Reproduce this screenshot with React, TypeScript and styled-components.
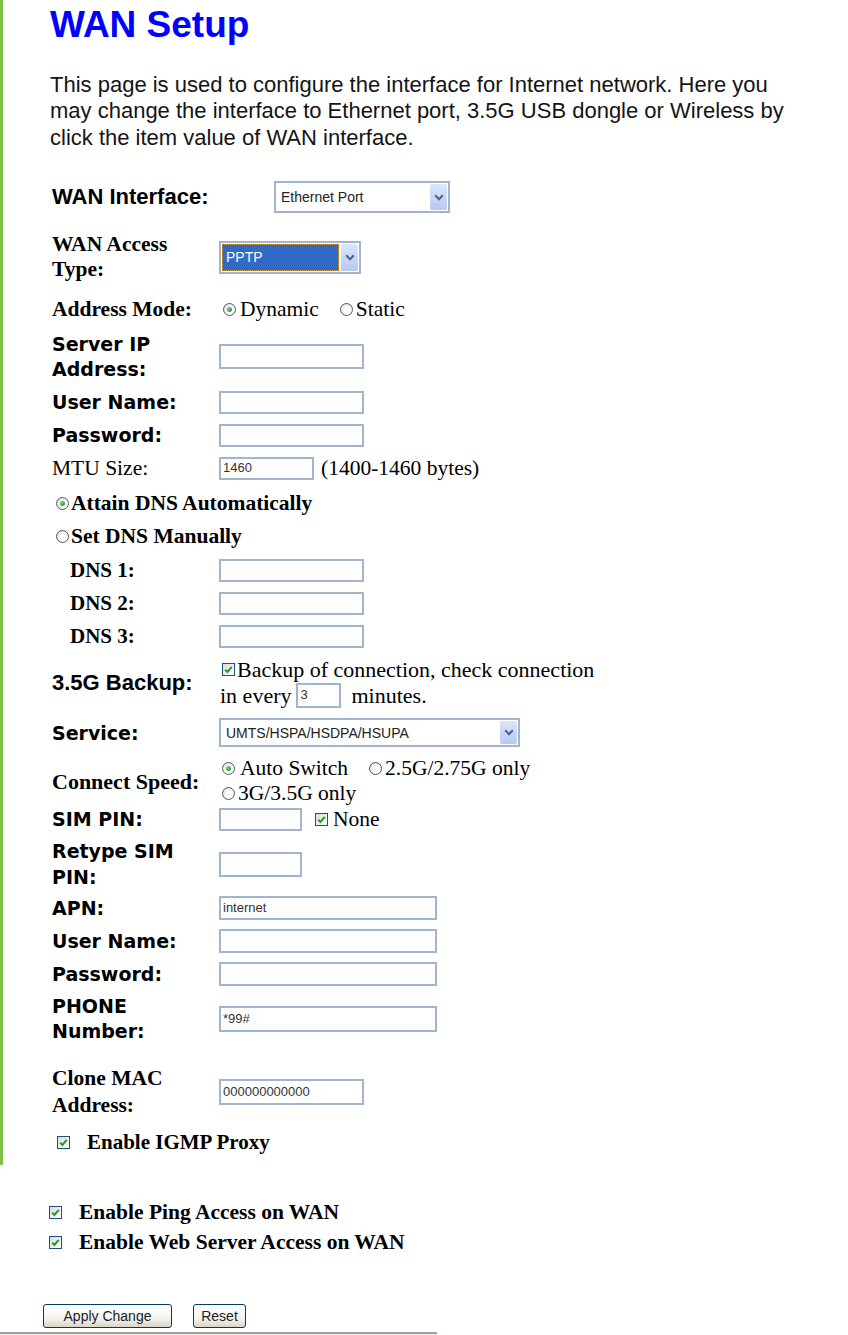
import React from "react";
import styled, { createGlobalStyle } from "styled-components";

const GlobalStyle = createGlobalStyle`
  html, body {
    margin: 0;
    padding: 0;
    background: #ffffff;
  }
`;

type Face = "arial" | "times" | "verdana";

const faces: Record<Face, string> = {
  arial: `"Liberation Sans", Arial, sans-serif`,
  times: `"Liberation Serif", "Times New Roman", serif`,
  verdana: `"DejaVu Sans", Verdana, sans-serif`,
};

const Page = styled.div`
  width: 848px;
  height: 1335px;
  display: flex;
  flex-direction: column;
  background: #ffffff;
  overflow: hidden;
`;

const Framed = styled.section`
  border-left: 3px solid #7dc242;
  padding: 4px 0 11px 47px;
`;

const Title = styled.h1`
  margin: 0;
  font: bold 37px/42px "Liberation Sans", Arial, sans-serif;
  color: #0000ff;
`;

const Intro = styled.p`
  margin: 25.5px 0 0;
  font: 22px/26.5px "Liberation Sans", Arial, sans-serif;
  color: #141414;
  white-space: nowrap;
`;

const Form = styled.div`
  margin-left: 2px;
  display: flex;
  flex-direction: column;
`;

const Row = styled.div<{ $h?: number; $mt: number; $pl?: number }>`
  display: flex;
  align-items: center;
  height: ${(p) => p.$h ?? 24}px;
  margin-top: ${(p) => p.$mt}px;
  padding-left: ${(p) => p.$pl ?? 0}px;
`;

const Label = styled.div<{
  $face: Face;
  $size: number;
  $lh: number;
  $regular?: boolean;
  $indent?: number;
}>`
  box-sizing: border-box;
  flex: none;
  width: 167px;
  padding-left: ${(p) => p.$indent ?? 0}px;
  font-family: ${(p) => faces[p.$face]};
  font-size: ${(p) => p.$size}px;
  line-height: ${(p) => p.$lh}px;
  font-weight: ${(p) => (p.$regular ? 400 : 700)};
  color: #000;
  white-space: nowrap;
`;

const Field = styled.input<{ $w: number; $h?: number; $ml?: number }>`
  box-sizing: border-box;
  flex: none;
  width: ${(p) => p.$w}px;
  height: ${(p) => p.$h ?? 23}px;
  margin: 0 0 0 ${(p) => p.$ml ?? 0}px;
  padding: 0 2px 2px;
  border: 2px solid #a3b5cc;
  background: #fff;
  font: 13px "Liberation Sans", Arial, sans-serif;
  color: #333;
  outline: none;
`;

const SelectBox = styled.div<{ $w: number; $h: number; $ml?: number }>`
  box-sizing: border-box;
  flex: none;
  display: flex;
  width: ${(p) => p.$w}px;
  height: ${(p) => p.$h}px;
  margin-left: ${(p) => p.$ml ?? 0}px;
  padding: 1px;
  border: 2px solid #a3b5cc;
  background: #fff;
`;

const SelectValue = styled.div<{ $active?: boolean }>`
  flex: 1;
  display: flex;
  align-items: center;
  padding-left: 4px;
  font: 14px "Liberation Sans", Arial, sans-serif;
  color: ${(p) => (p.$active ? "#ffffff" : "#222")};
  background: ${(p) => (p.$active ? "#316ac5" : "transparent")};
  outline: ${(p) => (p.$active ? "1px dotted #e0a040" : "none")};
  outline-offset: -1px;
`;

const ArrowButton = styled.div`
  flex: none;
  width: 17px;
  margin-left: 2px;
  border-radius: 2px;
  background: linear-gradient(#dbe6fc, #b6c9f3);
  display: flex;
  align-items: center;
  justify-content: center;
`;

const Text = styled.span<{ $face?: Face; $bold?: boolean; $size?: number; $ml?: number }>`
  font-family: ${(p) => faces[p.$face ?? "times"]};
  font-size: ${(p) => p.$size ?? 21.5}px;
  font-weight: ${(p) => (p.$bold ? 700 : 400)};
  line-height: 25px;
  margin-left: ${(p) => p.$ml ?? 0}px;
  color: #000;
  white-space: nowrap;
`;

const Options = styled.div<{ $ml?: number }>`
  display: flex;
  flex-direction: column;
  margin-left: ${(p) => p.$ml ?? 0}px;
`;

const OptLine = styled.div<{ $h?: number }>`
  display: flex;
  align-items: center;
  height: ${(p) => p.$h ?? 25}px;
`;

const RadioRing = styled.span<{ $ml?: number }>`
  box-sizing: border-box;
  flex: none;
  width: 13px;
  height: 13px;
  margin-left: ${(p) => p.$ml ?? 0}px;
  border-radius: 50%;
  border: 1.5px solid #4f5b68;
  background: radial-gradient(circle at 60% 60%, #ffffff 30%, #cfd3d8);
  display: flex;
  align-items: center;
  justify-content: center;
`;

const RadioDot = styled.span`
  width: 5px;
  height: 5px;
  border-radius: 50%;
  background: radial-gradient(circle at 35% 35%, #6fd86f, #188a18);
`;

const CheckBox = styled.span<{ $ml?: number }>`
  box-sizing: border-box;
  flex: none;
  width: 13px;
  height: 13px;
  margin-left: ${(p) => p.$ml ?? 0}px;
  border: 1px solid #1c5180;
  background: linear-gradient(135deg, #dcdcd6, #ffffff);
  display: flex;
  align-items: center;
  justify-content: center;
`;

const Bottom = styled.section`
  display: flex;
  flex-direction: column;
  padding-left: 43px;
`;

const Buttons = styled.div`
  display: flex;
  gap: 21px;
  height: 24px;
  margin-top: 50px;
`;

const Button = styled.button<{ $w: number }>`
  box-sizing: border-box;
  width: ${(p) => p.$w}px;
  height: 24px;
  padding: 0 0 1px;
  border: 1px solid #003c74;
  border-radius: 3px;
  background: linear-gradient(#ffffff, #f4f4ef 60%, #d9d5c9);
  font: 14px "Liberation Sans", Arial, sans-serif;
  color: #222;
`;

const Footer = styled.div`
  box-sizing: border-box;
  width: 437px;
  height: 3px;
  margin-top: 4px;
  border-top: 2px solid #a09f98;
  background: #ecebe4;
`;

const Radio: React.FC<{ on?: boolean; ml?: number }> = ({ on, ml }) => (
  <RadioRing $ml={ml}>{on && <RadioDot />}</RadioRing>
);

const Check: React.FC<{ ml?: number }> = ({ ml }) => (
  <CheckBox $ml={ml}>
    <svg width="9" height="9" viewBox="0 0 9 9">
      <path d="M1.2 4.6 L3.4 6.9 L7.8 1.8" fill="none" stroke="#1f9d1f" strokeWidth="2" />
    </svg>
  </CheckBox>
);

const Select: React.FC<{ w: number; h: number; ml?: number; value: string; active?: boolean }> = ({
  w,
  h,
  ml,
  value,
  active,
}) => (
  <SelectBox $w={w} $h={h} $ml={ml}>
    <SelectValue $active={active}>{value}</SelectValue>
    <ArrowButton>
      <svg width="10" height="7" viewBox="0 0 10 7">
        <path d="M1.2 1.3 L5 5.2 L8.8 1.3" fill="none" stroke="#4d6185" strokeWidth="2" />
      </svg>
    </ArrowButton>
  </SelectBox>
);

const App: React.FC = () => {
  return (
    <Page>
      <GlobalStyle />
      <Framed>
        <Title>WAN Setup</Title>
        <Intro>
          This page is used to configure the interface for Internet network. Here you
          <br />
          may change the interface to Ethernet port, 3.5G USB dongle or Wireless by
          <br />
          click the item value of WAN interface.
        </Intro>

        <Form>
          <Row $mt={30} $h={32}>
            <Label $face="arial" $size={22} $lh={26}>WAN Interface:</Label>
            <Select w={176} h={32} ml={55} value="Ethernet Port" />
          </Row>

          <Row $mt={19} $h={50}>
            <Label $face="times" $size={21.5} $lh={25}>
              WAN Access
              <br />
              Type:
            </Label>
            <Select w={142} h={33} value="PPTP" active />
          </Row>

          <Row $mt={15} $h={25}>
            <Label $face="times" $size={21.5} $lh={25}>Address Mode:</Label>
            <Options $ml={4}>
              <OptLine>
                <Radio on />
                <Text $ml={4}>Dynamic</Text>
                <Radio ml={21} />
                <Text $ml={3}>Static</Text>
              </OptLine>
            </Options>
          </Row>

          <Row $mt={10} $h={49}>
            <Label $face="verdana" $size={19} $lh={24.5}>
              Server IP
              <br />
              Address:
            </Label>
            <Field $w={145} $h={25} readOnly />
          </Row>

          <Row $mt={9}>
            <Label $face="verdana" $size={19} $lh={24}>User Name:</Label>
            <Field $w={145} readOnly />
          </Row>

          <Row $mt={9}>
            <Label $face="verdana" $size={19} $lh={24}>Password:</Label>
            <Field $w={145} readOnly />
          </Row>

          <Row $mt={9}>
            <Label $face="times" $size={21.5} $lh={24} $regular>MTU Size:</Label>
            <Field $w={95} readOnly defaultValue="1460" />
            <Text $ml={7}>(1400-1460 bytes)</Text>
          </Row>

          <Row $mt={11} $pl={4}>
            <Radio on />
            <Text $bold $ml={2}>Attain DNS Automatically</Text>
          </Row>

          <Row $mt={9} $pl={4}>
            <Radio />
            <Text $bold $ml={2}>Set DNS Manually</Text>
          </Row>

          {[1, 2, 3].map((n, i) => (
            <Row key={n} $mt={i === 0 ? 10 : 9}>
              <Label $face="times" $size={21} $lh={24} $indent={18}>DNS {n}:</Label>
              <Field $w={145} readOnly />
            </Row>
          ))}

          <Row $mt={9} $h={51}>
            <Label $face="arial" $size={22} $lh={26}>3.5G Backup:</Label>
            <Options>
              <OptLine>
                <Check ml={3} />
                <Text $size={22} $ml={2}>Backup of connection, check connection</Text>
              </OptLine>
              <OptLine $h={26}>
                <Text $size={22} $ml={1}>in every</Text>
                <Field $w={45} $h={25} $ml={5} readOnly defaultValue="3" />
                <Text $size={22} $ml={10}>minutes.</Text>
              </OptLine>
            </Options>
          </Row>

          <Row $mt={10} $h={29}>
            <Label $face="verdana" $size={19} $lh={24}>Service:</Label>
            <Select w={301} h={29} value="UMTS/HSPA/HSDPA/HSUPA" />
          </Row>

          <Row $mt={9} $h={50}>
            <Label $face="times" $size={22} $lh={25}>Connect Speed:</Label>
            <Options $ml={3}>
              <OptLine>
                <Radio on />
                <Text $ml={5}>Auto Switch</Text>
                <Radio ml={21} />
                <Text $ml={3}>2.5G/2.75G only</Text>
              </OptLine>
              <OptLine>
                <Radio />
                <Text $ml={3}>3G/3.5G only</Text>
              </OptLine>
            </Options>
          </Row>

          <Row $mt={1}>
            <Label $face="verdana" $size={19} $lh={24}>SIM PIN:</Label>
            <Field $w={83} readOnly />
            <Check ml={13} />
            <Text $ml={5}>None</Text>
          </Row>

          <Row $mt={7} $h={52}>
            <Label $face="verdana" $size={19} $lh={26}>
              Retype SIM
              <br />
              PIN:
            </Label>
            <Field $w={83} $h={25} readOnly />
          </Row>

          <Row $mt={6}>
            <Label $face="verdana" $size={19} $lh={24}>APN:</Label>
            <Field $w={218} $h={24} readOnly defaultValue="internet" />
          </Row>

          <Row $mt={9}>
            <Label $face="verdana" $size={19} $lh={24}>User Name:</Label>
            <Field $w={218} $h={24} readOnly />
          </Row>

          <Row $mt={9}>
            <Label $face="verdana" $size={19} $lh={24}>Password:</Label>
            <Field $w={218} $h={24} readOnly />
          </Row>

          <Row $mt={8} $h={50}>
            <Label $face="verdana" $size={19} $lh={25}>
              PHONE
              <br />
              Number:
            </Label>
            <Field $w={218} $h={26} readOnly defaultValue="*99#" />
          </Row>

          <Row $mt={21} $h={54}>
            <Label $face="times" $size={21.5} $lh={27}>
              Clone MAC
              <br />
              Address:
            </Label>
            <Field $w={145} $h={26} readOnly defaultValue="000000000000" />
          </Row>

          <Row $mt={11} $pl={5}>
            <Check />
            <Text $bold $size={21} $ml={17}>Enable IGMP Proxy</Text>
          </Row>
        </Form>
      </Framed>

      <Bottom>
        <Row $mt={35} $pl={6}>
          <Check />
          <Text $bold $ml={17}>Enable Ping Access on WAN</Text>
        </Row>
        <Row $mt={6} $pl={6}>
          <Check />
          <Text $bold $ml={17}>Enable Web Server Access on WAN</Text>
        </Row>
        <Buttons>
          <Button $w={129}>Apply Change</Button>
          <Button $w={53}>Reset</Button>
        </Buttons>
      </Bottom>
      <Footer />
    </Page>
  );
};

export default App;
